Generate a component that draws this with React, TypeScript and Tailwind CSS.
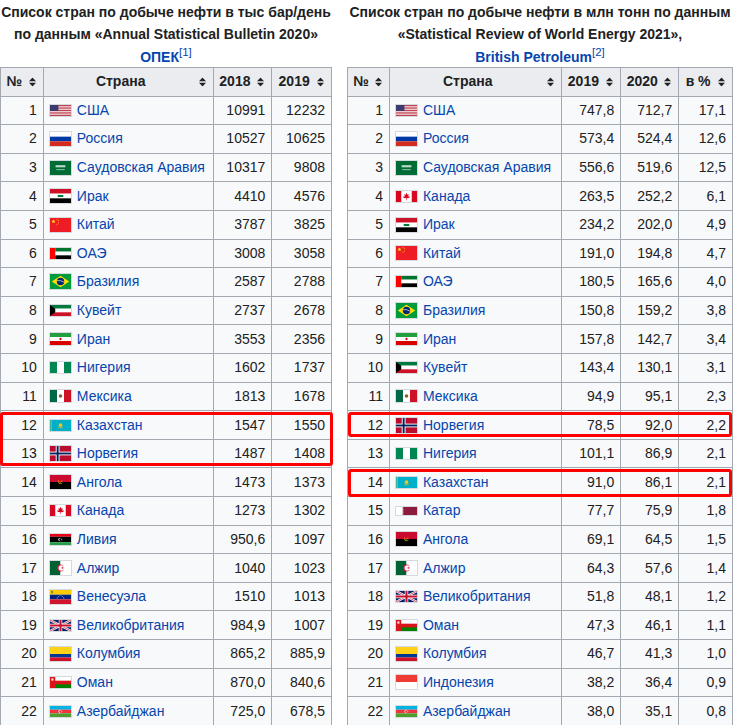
import React from "react";

type FlagDef = { h: number; vb: string; body: React.ReactNode };

function starPoints(cx: number, cy: number, r: number) {
  const pts: string[] = [];
  for (let i = 0; i < 10; i++) {
    const a = -Math.PI / 2 + (i * Math.PI) / 5;
    const rr = i % 2 === 0 ? r : r * 0.4;
    pts.push(`${(cx + rr * Math.cos(a)).toFixed(2)},${(cy + rr * Math.sin(a)).toFixed(2)}`);
  }
  return pts.join(" ");
}

const qatarPts = (() => {
  const p = ["0,0", "8,0"];
  for (let i = 0; i < 9; i++) {
    const y0 = (i * 11) / 9;
    p.push(`10.5,${(y0 + 11 / 18).toFixed(2)}`);
    p.push(`8,${(y0 + 11 / 9).toFixed(2)}`);
  }
  p.push("0,11");
  return p.join(" ");
})();

const FLAGS: Record<string, FlagDef> = {
  США: {
    h: 11,
    vb: "0 0 19 10",
    body: (
      <>
        <rect width="19" height="10" fill="#fff" />
        {Array.from({ length: 7 }).map((_, i) => (
          <rect key={i} y={(i * 2 * 10) / 13} width="19" height={10 / 13} fill="#b22234" />
        ))}
        <rect width="7.6" height={70 / 13} fill="#3c3b6e" />
      </>
    ),
  },
  Россия: {
    h: 14,
    vb: "0 0 9 6",
    body: (
      <>
        <rect width="9" height="2" fill="#fff" />
        <rect y="2" width="9" height="2" fill="#0039a6" />
        <rect y="4" width="9" height="2" fill="#d52b1e" />
      </>
    ),
  },
  "Саудовская Аравия": {
    h: 14,
    vb: "0 0 30 20",
    body: (
      <>
        <rect width="30" height="20" fill="#006c35" />
        <rect x="8" y="6" width="14" height="3" fill="#fff" opacity="0.75" />
        <rect x="9" y="12" width="12" height="1" fill="#fff" opacity="0.8" />
      </>
    ),
  },
  Ирак: {
    h: 14,
    vb: "0 0 3 2",
    body: (
      <>
        <rect width="3" height="0.667" fill="#ce1126" />
        <rect y="0.667" width="3" height="0.667" fill="#fff" />
        <rect y="1.333" width="3" height="0.667" fill="#000" />
        <rect x="1.1" y="0.85" width="0.8" height="0.3" fill="#007a3d" />
      </>
    ),
  },
  Китай: {
    h: 14,
    vb: "0 0 30 20",
    body: (
      <>
        <rect width="30" height="20" fill="#ee1c25" />
        <polygon points={starPoints(5, 5, 3)} fill="#ffff00" />
        <polygon points={starPoints(10, 2, 1)} fill="#ffff00" />
        <polygon points={starPoints(12, 4, 1)} fill="#ffff00" />
        <polygon points={starPoints(12, 7, 1)} fill="#ffff00" />
        <polygon points={starPoints(10, 9, 1)} fill="#ffff00" />
      </>
    ),
  },
  ОАЭ: {
    h: 11,
    vb: "0 0 12 6",
    body: (
      <>
        <rect x="3" width="9" height="2" fill="#00732f" />
        <rect x="3" y="2" width="9" height="2" fill="#fff" />
        <rect x="3" y="4" width="9" height="2" fill="#000" />
        <rect width="3" height="6" fill="#ff0000" />
      </>
    ),
  },
  Бразилия: {
    h: 15,
    vb: "0 0 20 14",
    body: (
      <>
        <rect width="20" height="14" fill="#009c3b" />
        <polygon points="1.7,7 10,1.7 18.3,7 10,12.3" fill="#ffdf00" />
        <circle cx="10" cy="7" r="3.5" fill="#002776" />
        <path d="M6.6,6.2 Q10,5.6 13.4,7.6" stroke="#fff" strokeWidth="0.6" fill="none" />
      </>
    ),
  },
  Кувейт: {
    h: 11,
    vb: "0 0 12 6",
    body: (
      <>
        <rect width="12" height="2" fill="#007a3d" />
        <rect y="2" width="12" height="2" fill="#fff" />
        <rect y="4" width="12" height="2" fill="#ce1126" />
        <polygon points="0,0 3,2 3,4 0,6" fill="#000" />
      </>
    ),
  },
  Иран: {
    h: 12,
    vb: "0 0 7 4",
    body: (
      <>
        <rect width="7" height="1.333" fill="#239f40" />
        <rect y="1.333" width="7" height="1.333" fill="#fff" />
        <rect y="2.667" width="7" height="1.333" fill="#da0000" />
        <circle cx="3.5" cy="2" r="0.38" fill="#da0000" />
      </>
    ),
  },
  Нигерия: {
    h: 11,
    vb: "0 0 6 3",
    body: (
      <>
        <rect width="6" height="3" fill="#fff" />
        <rect width="2" height="3" fill="#008751" />
        <rect x="4" width="2" height="3" fill="#008751" />
      </>
    ),
  },
  Мексика: {
    h: 12,
    vb: "0 0 7 4",
    body: (
      <>
        <rect width="7" height="4" fill="#fff" />
        <rect width="2.333" height="4" fill="#006847" />
        <rect x="4.667" width="2.333" height="4" fill="#ce1126" />
        <circle cx="3.5" cy="2" r="0.6" fill="#8c5a2b" />
      </>
    ),
  },
  Казахстан: {
    h: 11,
    vb: "0 0 12 6",
    body: (
      <>
        <rect width="12" height="6" fill="#00afca" />
        <circle cx="6" cy="2.8" r="1" fill="#fec50c" />
        <path d="M4.6,4 Q6,4.8 7.4,4" stroke="#fec50c" strokeWidth="0.35" fill="none" />
        <rect x="0.4" width="0.5" height="6" fill="#fec50c" opacity="0.8" />
      </>
    ),
  },
  Норвегия: {
    h: 15,
    vb: "0 0 22 16",
    body: (
      <>
        <rect width="22" height="16" fill="#ba0c2f" />
        <rect x="6" width="4" height="16" fill="#fff" />
        <rect y="6" width="22" height="4" fill="#fff" />
        <rect x="7" width="2" height="16" fill="#00205b" />
        <rect y="7" width="22" height="2" fill="#00205b" />
      </>
    ),
  },
  Ангола: {
    h: 14,
    vb: "0 0 3 2",
    body: (
      <>
        <rect width="3" height="1" fill="#cc092f" />
        <rect y="1" width="3" height="1" fill="#000" />
        <path d="M1.25,0.75 A0.32,0.32 0 1 0 1.8,1.1" stroke="#ffcb00" strokeWidth="0.08" fill="none" />
        <path d="M1.25,1.25 L1.75,0.8" stroke="#ffcb00" strokeWidth="0.1" />
      </>
    ),
  },
  Канада: {
    h: 11,
    vb: "0 0 24 12",
    body: (
      <>
        <rect width="24" height="12" fill="#fff" />
        <rect width="6" height="12" fill="#d80621" />
        <rect x="18" width="6" height="12" fill="#d80621" />
        <polygon
          points="12,2 13,4 14.5,3.5 14,6.2 15.8,5.6 15.2,7.6 12.3,8 12.3,10 11.7,10 11.7,8 8.8,7.6 8.2,5.6 10,6.2 9.5,3.5 11,4"
          fill="#d80621"
        />
      </>
    ),
  },
  Ливия: {
    h: 11,
    vb: "0 0 48 24",
    body: (
      <>
        <rect width="48" height="6" fill="#e70013" />
        <rect y="6" width="48" height="12" fill="#000" />
        <rect y="18" width="48" height="6" fill="#239e46" />
        <circle cx="23" cy="12" r="4" fill="#fff" />
        <circle cx="24.2" cy="12" r="3.3" fill="#000" />
        <polygon points={starPoints(27, 12, 1.8)} fill="#fff" />
      </>
    ),
  },
  Алжир: {
    h: 14,
    vb: "0 0 3 2",
    body: (
      <>
        <rect width="1.5" height="2" fill="#006233" />
        <rect x="1.5" width="1.5" height="2" fill="#fff" />
        <circle cx="1.5" cy="1" r="0.5" fill="#d21034" />
        <circle cx="1.62" cy="1" r="0.4" fill="#fff" />
        <polygon points={starPoints(1.78, 1, 0.2)} fill="#d21034" />
      </>
    ),
  },
  Венесуэла: {
    h: 14,
    vb: "0 0 3 2",
    body: (
      <>
        <rect width="3" height="0.667" fill="#ffcc00" />
        <rect y="0.667" width="3" height="0.667" fill="#00247d" />
        <rect y="1.333" width="3" height="0.667" fill="#cf142b" />
        {Array.from({ length: 8 }).map((_, i) => {
          const a = Math.PI + (i + 0.5) * (Math.PI / 8);
          return (
            <circle key={i} cx={1.5 + 0.5 * Math.cos(a)} cy={1.32 + 0.5 * Math.sin(a)} r="0.06" fill="#fff" />
          );
        })}
        <rect x="0.15" y="0.12" width="0.3" height="0.35" fill="#7a8a3a" />
      </>
    ),
  },
  Великобритания: {
    h: 11,
    vb: "0 0 60 30",
    body: (
      <>
        <rect width="60" height="30" fill="#012169" />
        <path d="M0,0 L60,30 M60,0 L0,30" stroke="#fff" strokeWidth="6" />
        <path d="M0,0 L60,30 M60,0 L0,30" stroke="#c8102e" strokeWidth="2" />
        <path d="M30,0 V30 M0,15 H60" stroke="#fff" strokeWidth="10" />
        <path d="M30,0 V30 M0,15 H60" stroke="#c8102e" strokeWidth="6" />
      </>
    ),
  },
  Колумбия: {
    h: 14,
    vb: "0 0 3 2",
    body: (
      <>
        <rect width="3" height="1" fill="#fcd116" />
        <rect y="1" width="3" height="0.5" fill="#003893" />
        <rect y="1.5" width="3" height="0.5" fill="#ce1126" />
      </>
    ),
  },
  Оман: {
    h: 11,
    vb: "0 0 24 12",
    body: (
      <>
        <rect width="24" height="12" fill="#db161b" />
        <rect x="6" width="18" height="4" fill="#fff" />
        <rect x="6" y="8" width="18" height="4" fill="#008000" />
        <rect x="1.5" y="1.5" width="2.5" height="2.5" fill="#fff" opacity="0.85" />
      </>
    ),
  },
  Азербайджан: {
    h: 11,
    vb: "0 0 24 12",
    body: (
      <>
        <rect width="24" height="4" fill="#00b5e2" />
        <rect y="4" width="24" height="4" fill="#ef3340" />
        <rect y="8" width="24" height="4" fill="#509e2f" />
        <circle cx="11.5" cy="6" r="1.8" fill="#fff" />
        <circle cx="12" cy="6" r="1.5" fill="#ef3340" />
        <polygon points={starPoints(13.6, 6, 0.8)} fill="#fff" />
      </>
    ),
  },
  Катар: {
    h: 8,
    vb: "0 0 28 11",
    body: (
      <>
        <rect width="28" height="11" fill="#8d1b3d" />
        <polygon points={qatarPts} fill="#fff" />
      </>
    ),
  },
  Индонезия: {
    h: 14,
    vb: "0 0 3 2",
    body: (
      <>
        <rect width="3" height="1" fill="#ee3b33" />
        <rect y="1" width="3" height="1" fill="#fff" />
      </>
    ),
  },
};

function Flag({ name }: { name: string }) {
  const f = FLAGS[name];
  return (
    <svg
      width={21}
      height={f.h}
      viewBox={f.vb}
      preserveAspectRatio="none"
      className="box-content shrink-0 border border-[#d6d9de]"
    >
      {f.body}
    </svg>
  );
}

function SortIcon() {
  return (
    <svg width="7" height="9" viewBox="0 0 7 9" className="absolute right-[7px] top-1/2 -translate-y-1/2">
      <polygon points="0,3.8 3.5,0 7,3.8" fill="#202122" />
      <polygon points="0,5.2 3.5,9 7,5.2" fill="#202122" />
    </svg>
  );
}

type Row = (string | number)[];

const leftRows: Row[] = [
  [1, "США", "10991", "12232"],
  [2, "Россия", "10527", "10625"],
  [3, "Саудовская Аравия", "10317", "9808"],
  [4, "Ирак", "4410", "4576"],
  [5, "Китай", "3787", "3825"],
  [6, "ОАЭ", "3008", "3058"],
  [7, "Бразилия", "2587", "2788"],
  [8, "Кувейт", "2737", "2678"],
  [9, "Иран", "3553", "2356"],
  [10, "Нигерия", "1602", "1737"],
  [11, "Мексика", "1813", "1678"],
  [12, "Казахстан", "1547", "1550"],
  [13, "Норвегия", "1487", "1408"],
  [14, "Ангола", "1473", "1373"],
  [15, "Канада", "1273", "1302"],
  [16, "Ливия", "950,6", "1097"],
  [17, "Алжир", "1040", "1023"],
  [18, "Венесуэла", "1510", "1013"],
  [19, "Великобритания", "984,9", "1007"],
  [20, "Колумбия", "865,2", "885,9"],
  [21, "Оман", "870,0", "840,6"],
  [22, "Азербайджан", "725,0", "678,5"],
];

const rightRows: Row[] = [
  [1, "США", "747,8", "712,7", "17,1"],
  [2, "Россия", "573,4", "524,4", "12,6"],
  [3, "Саудовская Аравия", "556,6", "519,6", "12,5"],
  [4, "Канада", "263,5", "252,2", "6,1"],
  [5, "Ирак", "234,2", "202,0", "4,9"],
  [6, "Китай", "191,0", "194,8", "4,7"],
  [7, "ОАЭ", "180,5", "165,6", "4,0"],
  [8, "Бразилия", "150,8", "159,2", "3,8"],
  [9, "Иран", "157,8", "142,7", "3,4"],
  [10, "Кувейт", "143,4", "130,1", "3,1"],
  [11, "Мексика", "94,9", "95,1", "2,3"],
  [12, "Норвегия", "78,5", "92,0", "2,2"],
  [13, "Нигерия", "101,1", "86,9", "2,1"],
  [14, "Казахстан", "91,0", "86,1", "2,1"],
  [15, "Катар", "77,7", "75,9", "1,8"],
  [16, "Ангола", "69,1", "64,5", "1,5"],
  [17, "Алжир", "64,3", "57,6", "1,4"],
  [18, "Великобритания", "51,8", "48,1", "1,2"],
  [19, "Оман", "47,3", "46,1", "1,1"],
  [20, "Колумбия", "46,7", "41,3", "1,0"],
  [21, "Индонезия", "38,2", "36,4", "0,9"],
  [22, "Азербайджан", "38,0", "35,1", "0,8"],
];

function OilTable({ heads, widths, rows }: { heads: string[]; widths: number[]; rows: Row[] }) {
  return (
    <table className="table-fixed border-collapse border border-[#a2a9b1] text-[14px] text-[#202122]">
      <colgroup>
        {widths.map((w, i) => (
          <col key={i} style={{ width: w }} />
        ))}
      </colgroup>
      <thead>
        <tr>
          {heads.map((h) => (
            <th
              key={h}
              className="relative h-[28.5px] border border-[#a2a9b1] bg-[#eaecf0] pl-[5px] pr-[20px] text-center font-bold whitespace-nowrap"
            >
              {h}
              <SortIcon />
            </th>
          ))}
        </tr>
      </thead>
      <tbody>
        {rows.map((r) => (
          <tr key={r[0]} className="h-[28.62px]">
            <td className="border border-[#a2a9b1] bg-[#f8f9fa] px-[6px] text-right">{r[0]}</td>
            <td className="border border-[#a2a9b1] bg-[#f8f9fa] px-[5px]">
              <div className="flex items-center gap-[5px] whitespace-nowrap">
                <Flag name={r[1] as string} />
                <a className="text-[#0645ad]">{r[1]}</a>
              </div>
            </td>
            {r.slice(2).map((v, i) => (
              <td key={i} className="border border-[#a2a9b1] bg-[#f8f9fa] px-[6px] text-right">
                {v}
              </td>
            ))}
          </tr>
        ))}
      </tbody>
    </table>
  );
}

export default function App() {
  return (
    <div className="flex w-[733px] gap-[15px] bg-white font-['Liberation_Sans',Arial,sans-serif] text-[#202122]">
      <div className="relative w-[332px] shrink-0">
        <div className="h-[67px] pt-[1px] text-center text-[14px] leading-[22.4px] font-bold">
          <div className="whitespace-nowrap">Список стран по добыче нефти в тыс бар/день</div>
          <div className="whitespace-nowrap">по данным «Annual Statistical Bulletin 2020»</div>
          <div>
            <a className="text-[#0645ad]">ОПЕК</a>
            <sup className="text-[11.5px] font-normal text-[#0645ad]">[1]</sup>
          </div>
        </div>
        <OilTable heads={["№", "Страна", "2018", "2019"]} widths={[43, 170, 59, 60]} rows={leftRows} />
        <div className="absolute left-0 top-[412px] h-[54px] w-[333px] rounded-[3px] border-[3px] border-[#ff0000]" />
      </div>
      <div className="relative w-[386px] shrink-0">
        <div className="h-[67px] pt-[1px] text-center text-[14px] leading-[22.4px] font-bold">
          <div className="whitespace-nowrap">Список стран по добыче нефти в млн тонн по данным</div>
          <div className="whitespace-nowrap">«Statistical Review of World Energy 2021»,</div>
          <div>
            <a className="text-[#0645ad]">British Petroleum</a>
            <sup className="text-[11.5px] font-normal text-[#0645ad]">[2]</sup>
          </div>
        </div>
        <OilTable
          heads={["№", "Страна", "2019", "2020", "в %"]}
          widths={[42, 172, 60, 58, 54]}
          rows={rightRows}
        />
        <div className="absolute left-[1px] top-[412px] h-[25px] w-[384px] rounded-[3px] border-[3px] border-[#ff0000]" />
        <div className="absolute left-[1px] top-[469px] h-[28px] w-[384px] rounded-[3px] border-[3px] border-[#ff0000]" />
      </div>
    </div>
  );
}
